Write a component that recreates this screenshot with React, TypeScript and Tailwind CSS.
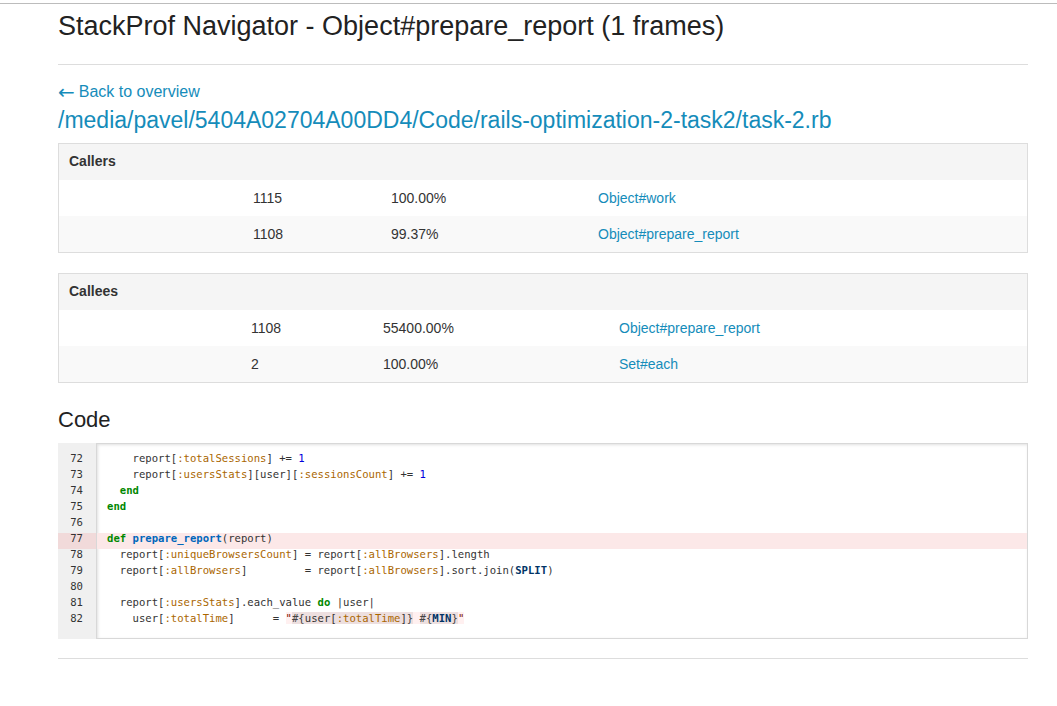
type Tok = [string, string];

const C = {
  plain: "text-[#333]",
  sym: "text-[#aa6600]",
  num: "text-[#0000dd]",
  kw: "text-[#008800] font-bold",
  fn: "text-[#0066bb] font-bold",
  const: "text-[#003366] font-bold",
  delim: "text-[#771100]",
  idelim: "text-[#444]",
};

const LINES: { n: number; toks: Tok[]; hl?: boolean }[] = [
  { n: 72, toks: [["plain", "    report["], ["sym", ":totalSessions"], ["plain", "] += "], ["num", "1"]] },
  {
    n: 73,
    toks: [
      ["plain", "    report["],
      ["sym", ":usersStats"],
      ["plain", "][user]["],
      ["sym", ":sessionsCount"],
      ["plain", "] += "],
      ["num", "1"],
    ],
  },
  { n: 74, toks: [["plain", "  "], ["kw", "end"]] },
  { n: 75, toks: [["kw", "end"]] },
  { n: 76, toks: [] },
  { n: 77, hl: true, toks: [["kw", "def"], ["plain", " "], ["fn", "prepare_report"], ["plain", "(report)"]] },
  {
    n: 78,
    toks: [
      ["plain", "  report["],
      ["sym", ":uniqueBrowsersCount"],
      ["plain", "] = report["],
      ["sym", ":allBrowsers"],
      ["plain", "].length"],
    ],
  },
  {
    n: 79,
    toks: [
      ["plain", "  report["],
      ["sym", ":allBrowsers"],
      ["plain", "]         = report["],
      ["sym", ":allBrowsers"],
      ["plain", "].sort.join("],
      ["const", "SPLIT"],
      ["plain", ")"],
    ],
  },
  { n: 80, toks: [] },
  {
    n: 81,
    toks: [["plain", "  report["], ["sym", ":usersStats"], ["plain", "].each_value "], ["kw", "do"], ["plain", " |user|"]],
  },
];

function Row({ a, b, c, cols, odd }: { a: string; b: string; c: string; cols: string; odd?: boolean }) {
  return (
    <div className={`grid h-[36px] items-center text-[14px] text-[#333] ${cols} ${odd ? "bg-[#f9f9f9]" : "bg-white"}`}>
      <div />
      <div className="px-[8px]">{a}</div>
      <div className="px-[8px]">{b}</div>
      <div className="px-[8px]">
        <a href="#" className="text-[#158cba]">
          {c}
        </a>
      </div>
    </div>
  );
}

function Panel({ title, cols, rows }: { title: string; cols: string; rows: [string, string, string][] }) {
  return (
    <div className="border border-[#dddddd]">
      <div className="flex h-[36px] items-center bg-[#f5f5f5] px-[10px] pb-[1px] text-[14px] font-bold text-[#333]">{title}</div>
      {rows.map((r, i) => (
        <Row key={i} a={r[0]} b={r[1]} c={r[2]} cols={cols} odd={i % 2 === 1} />
      ))}
    </div>
  );
}

export default function App() {
  return (
    <div className="min-h-[706px] bg-white font-['Liberation_Sans',Arial,sans-serif]">
      <div className="h-[3px]" />
      <div className="border-t border-[#bcbcbc]" />
      <div className="ml-[58px] w-[970px]">
        <h1 className="mt-[8px] text-[27px] leading-[29px] text-[#222]">
          StackProf Navigator - Object#prepare_report (1 frames)
        </h1>
        <div className="mt-[23px] border-t border-[#dddddd]" />
        <a href="#" className="mt-[17px] flex h-[20px] items-center text-[16px] leading-[20px] text-[#158cba]">
          <span className="font-['DejaVu_Sans',sans-serif] text-[20px] leading-none">←</span>
          <span className="ml-[4px]">Back to overview</span>
        </a>
        <a href="#" className="mt-[6px] block text-[23px] leading-[24px] text-[#158cba]">
          /media/pavel/5404A02704A00DD4/Code/rails-optimization-2-task2/task-2.rb
        </a>

        <div className="mt-[11px]">
          <Panel
            title="Callers"
            cols="grid-cols-[186px_138px_207px_1fr]"
            rows={[
              ["1115", "100.00%", "Object#work"],
              ["1108", "99.37%", "Object#prepare_report"],
            ]}
          />
        </div>
        <div className="mt-[20px]">
          <Panel
            title="Callees"
            cols="grid-cols-[184px_132px_236px_1fr]"
            rows={[
              ["1108", "55400.00%", "Object#prepare_report"],
              ["2", "100.00%", "Set#each"],
            ]}
          />
        </div>

        <h2 className="mt-[25px] text-[22px] leading-[24px] text-[#222]">Code</h2>

        <div className="mt-[11px] flex font-['DejaVu_Sans_Mono',monospace] text-[10.6px]">
          <div className="w-[38px] shrink-0 bg-[#f0f0f0] pt-[10px] pb-[10px] text-right text-[#333]">
            {[...LINES, { n: 82, hl: false }].map((l) => (
              <div key={l.n} className={`h-[16px] pr-[13px] leading-[10px] ${l.hl ? "bg-[#f1dada]" : ""}`}>
                {l.n}
              </div>
            ))}
          </div>
          <div className="flex-1 border border-[#d8d8d8] pt-[9px] pb-[9px] shadow-[inset_1px_1px_3px_rgba(0,0,0,0.12)]">
            {LINES.map((l) => (
              <div key={l.n} className={`h-[16px] whitespace-pre pl-[10px] leading-[10px] ${l.hl ? "bg-[#fce8e8]" : ""}`}>
                {l.toks.map((t, i) => (
                  <span key={i} className={C[t[0] as keyof typeof C]}>
                    {t[1]}
                  </span>
                ))}
              </div>
            ))}
            <div className="h-[16px] whitespace-pre pl-[10px] leading-[10px] text-[#333]">
              {"    user["}
              <span className={C.sym}>:totalTime</span>
              {"]      = "}
              <span className="bg-[#fff0f0]">
                <span className={C.delim}>"</span>
                <span className="bg-[rgba(0,0,0,0.07)]">
                  <span className={C.idelim}>{"#{"}</span>
                  {"user["}
                  <span className={C.sym}>:totalTime</span>
                  {"]"}
                  <span className={C.idelim}>{"}"}</span>
                </span>
                {" "}
                <span className="bg-[rgba(0,0,0,0.07)]">
                  <span className={C.idelim}>{"#{"}</span>
                  <span className={C.const}>MIN</span>
                  <span className={C.idelim}>{"}"}</span>
                </span>
                <span className={C.delim}>"</span>
              </span>
            </div>
          </div>
        </div>

        <div className="mt-[19px] border-t border-[#dddddd]" />
      </div>
    </div>
  );
}
